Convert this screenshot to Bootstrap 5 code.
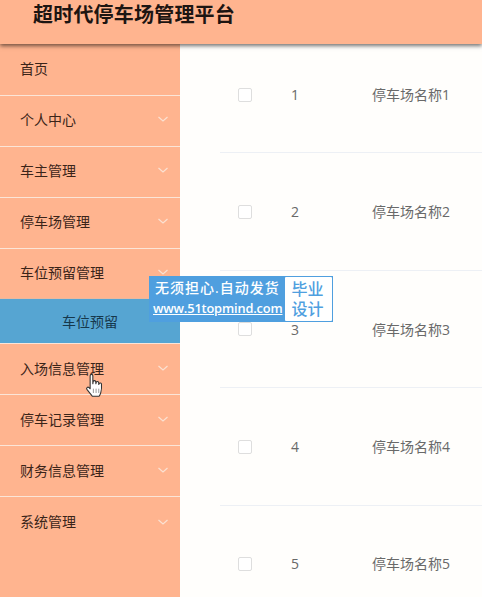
<!DOCTYPE html>
<html lang="zh">
<head>
<meta charset="utf-8">
<title>超时代停车场管理平台</title>
<link href="https://cdn.jsdelivr.net/npm/bootstrap@5.3.0/dist/css/bootstrap.min.css" rel="stylesheet">
<style>
html,body{height:100%;overflow:hidden}
body{font-family:"Open Sans","Noto Sans CJK SC",sans-serif;background:#fffefc;position:relative}
.topbar{height:44px;background:#ffb48f;box-shadow:0 2px 4px rgba(0,0,0,.55);position:relative;z-index:2;padding-left:33px;color:#1d1512;font-size:20px;font-weight:700;line-height:28px;letter-spacing:.2px;font-family:"Noto Sans CJK SC",sans-serif}
.shell{height:553px}
.sidemenu{width:180px;background:#ffb48f;flex:none}
.mitem{height:51px;padding:0 10px 2px 20px;color:#3b2419;font-size:14px;border-bottom:1px solid #fbe5d8}
.mitem:first-child{height:52px}
.mitem.upper{padding-bottom:4px}
.mitem.last{border-bottom:0}
.subitem{height:46px;background:#56a5d2;color:#16384c;font-size:14px;padding-left:62px;margin-top:-2px;border-top:1px solid #e9b99f;border-bottom:1px solid #fbe5d8}
.chev{width:12px;height:12px;flex:none;margin-right:1px}
.tablearea{padding-left:40px;flex:1;min-width:0}
.trow{height:117.5px;border-bottom:1px solid #edf0f5;color:#696969;font-size:14px}
.trow.first{height:109.4px;padding-bottom:7px}
.trow.last{height:91.1px;padding-top:25px;border-bottom:0}
.tick{width:14px;height:14px;border:1px solid #dedede;border-radius:2px;background:#fff;margin-left:18px;flex:none}
.tnum{width:80px;padding-left:39px;flex:none}
.tname{margin-left:40px}
.promo{position:absolute;left:149px;top:276px;width:184px;height:46px;background:#4f9fdf;z-index:3;color:#fff;padding:1px 1px 1px 4px}
.promo-text{width:131px;flex:none}
.promo-a{font-size:14px;line-height:22px;letter-spacing:1px;padding-left:2px;font-weight:500}
.promo-b{font-size:12.800px;line-height:19px;text-decoration:underline;white-space:nowrap;font-weight:600;letter-spacing:-.15px}
.promo-c{background:#fff;color:#4f9fdf;font-size:16px;line-height:20px;text-align:center;flex:1;border-radius:1px;padding:2px 2px 0 0;margin-left:1px;font-weight:500}
.hand{position:absolute;left:84px;top:373px;width:22px;height:27px;z-index:4}
</style>
</head>
<body>
<header class="topbar">超时代停车场管理平台</header>
<div class="shell d-flex">
<nav class="sidemenu d-flex flex-column">
<div class="mitem d-flex align-items-center">首页</div>
<div class="mitem upper d-flex align-items-center justify-content-between"><span>个人中心</span><svg class="chev" viewBox="0 0 12 12"><path d="M1.5 4 6 8 10.500 4" fill="none" stroke="#fbe1d2" stroke-width="1.200"/></svg></div>
<div class="mitem upper d-flex align-items-center justify-content-between"><span>车主管理</span><svg class="chev" viewBox="0 0 12 12"><path d="M1.5 4 6 8 10.500 4" fill="none" stroke="#fbe1d2" stroke-width="1.200"/></svg></div>
<div class="mitem upper d-flex align-items-center justify-content-between"><span>停车场管理</span><svg class="chev" viewBox="0 0 12 12"><path d="M1.5 4 6 8 10.500 4" fill="none" stroke="#fbe1d2" stroke-width="1.200"/></svg></div>
<div class="mitem upper d-flex align-items-center justify-content-between"><span>车位预留管理</span><svg class="chev" viewBox="0 0 12 12"><path d="M1.5 4 6 8 10.500 4" fill="none" stroke="#fbe1d2" stroke-width="1.200"/></svg></div>
<div class="subitem d-flex align-items-center">车位预留</div>
<div class="mitem d-flex align-items-center justify-content-between"><span>入场信息管理</span><svg class="chev" viewBox="0 0 12 12"><path d="M1.5 4 6 8 10.500 4" fill="none" stroke="#fbe1d2" stroke-width="1.200"/></svg></div>
<div class="mitem d-flex align-items-center justify-content-between"><span>停车记录管理</span><svg class="chev" viewBox="0 0 12 12"><path d="M1.5 4 6 8 10.500 4" fill="none" stroke="#fbe1d2" stroke-width="1.200"/></svg></div>
<div class="mitem d-flex align-items-center justify-content-between"><span>财务信息管理</span><svg class="chev" viewBox="0 0 12 12"><path d="M1.5 4 6 8 10.500 4" fill="none" stroke="#fbe1d2" stroke-width="1.200"/></svg></div>
<div class="mitem last d-flex align-items-center justify-content-between"><span>系统管理</span><svg class="chev" viewBox="0 0 12 12"><path d="M1.5 4 6 8 10.500 4" fill="none" stroke="#fbe1d2" stroke-width="1.200"/></svg></div>
</nav>
<main class="tablearea">
<div class="trow first d-flex align-items-center"><span class="tick"></span><span class="tnum">1</span><span class="tname">停车场名称1</span></div>
<div class="trow d-flex align-items-center"><span class="tick"></span><span class="tnum">2</span><span class="tname">停车场名称2</span></div>
<div class="trow d-flex align-items-center"><span class="tick"></span><span class="tnum">3</span><span class="tname">停车场名称3</span></div>
<div class="trow d-flex align-items-center"><span class="tick"></span><span class="tnum">4</span><span class="tname">停车场名称4</span></div>
<div class="trow last d-flex align-items-center"><span class="tick"></span><span class="tnum">5</span><span class="tname">停车场名称5</span></div>
</main>
</div>
<aside class="promo d-flex">
<div class="promo-text"><div class="promo-a">无须担心.自动发货</div><div class="promo-b">www.51topmind.com</div></div>
<div class="promo-c">毕业<br>设计</div>
</aside>
<svg class="hand" viewBox="0 0 20 25"><path d="M5.500 2.500c0-1.600 2.500-1.600 2.500 0V10l.3-2c.3-1.300 2.300-1.200 2.400.2l.1 1.800.3-1.300c.4-1.200 2.200-1 2.300.3l.1 1.600.4-.8c.5-1 2-.7 2.100.5.200 2.500 0 5.500-.6 7.700-.4 1.700-1 2.700-1.600 3.500H7.500c-1.200-1.700-3-3.700-5-6.300-.9-1.300.7-2.800 2-1.600l1 1z" fill="#fff" stroke="#333" stroke-width="1" stroke-linejoin="round"/><path d="M8.500 14.500v4M11 14.500v4M13.500 14.500v4" stroke="#777" stroke-width=".7"/></svg>
<script src="https://cdn.jsdelivr.net/npm/bootstrap@5.3.0/dist/js/bootstrap.bundle.min.js"></script>
</body>
</html>
